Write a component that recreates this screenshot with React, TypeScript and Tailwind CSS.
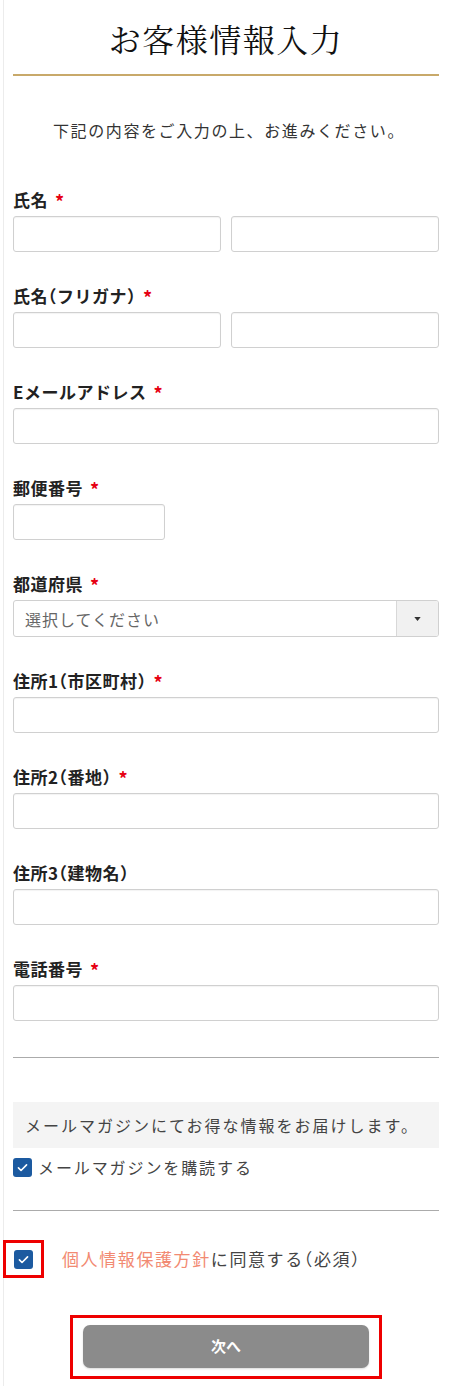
const SANS = "font-['Noto_Sans_CJK_JP','Noto_Sans',sans-serif]";

const Label = ({ text, required }: { text: string; required?: boolean }) => (
  <div className="h-6 mb-1 flex items-center text-[17px] font-bold text-[#222] leading-6 tracking-[0.5px] [font-feature-settings:'halt']">
    <span>{text}</span>
    {required && <span className="ml-[7px] text-[#e60012] text-[18px] leading-none mt-[2px]">*</span>}
  </div>
);

const TextInput = ({ className = "" }: { className?: string }) => (
  <input
    type="text"
    className={`h-[36px] rounded-[3px] border border-[#d0d0d0] bg-white px-3 shadow-[inset_0_1px_1px_rgba(0,0,0,0.05)] ${className}`}
  />
);

const Check = () => (
  <span className="flex h-[19px] w-[19px] shrink-0 items-center justify-center rounded-[3px] bg-[#1c5aa0]">
    <svg viewBox="0 0 16 16" className="h-[13px] w-[13px]">
      <path d="M3 8.5l3.2 3.2L13 4.8" fill="none" stroke="white" strokeWidth="2" strokeLinecap="round" strokeLinejoin="round" />
    </svg>
  </span>
);

const App = () => {
  return (
    <div className={`${SANS} w-[450px] min-h-[1386px] bg-white`}>
      <div className="ml-[3px] min-h-[1386px] border-l border-[#ececec] pl-[9px] pr-[11px] pt-[14px]">
        <div className="border-b-2 border-[#c8a96a] pb-[12px]">
          <h1 className="h-12 text-center text-[32px] leading-[48px] tracking-[1.5px] text-[#111] font-['Noto_Serif_CJK_JP','Liberation_Serif','Noto_Sans_CJK_JP',serif]">
            お客様情報入力
          </h1>
        </div>

        <p className="mt-[42px] h-6 pl-[6px] text-center text-[16px] leading-6 tracking-[1.6px] text-[#333]">
          下記の内容をご入力の上、お進みください。
        </p>

        <div className="mt-[46px]">
          <div className="mb-8">
            <Label text="氏名" required />
            <div className="flex gap-[10px]">
              <TextInput className="w-0 flex-1" />
              <TextInput className="w-0 flex-1" />
            </div>
          </div>
          <div className="mb-8">
            <Label text="氏名（フリガナ）" required />
            <div className="flex gap-[10px]">
              <TextInput className="w-0 flex-1" />
              <TextInput className="w-0 flex-1" />
            </div>
          </div>
          <div className="mb-8">
            <Label text="Eメールアドレス" required />
            <TextInput className="w-full block" />
          </div>
          <div className="mb-8">
            <Label text="郵便番号" required />
            <TextInput className="w-[152px] block" />
          </div>
          <div className="mb-8">
            <Label text="都道府県" required />
            <div className="flex h-[37px] overflow-hidden rounded-[3px] border border-[#d0d0d0]">
              <div className="flex flex-1 items-center pl-[11px] text-[16px] tracking-[1px] text-[#666]">選択してください</div>
              <div className="flex w-[42px] items-center justify-center border-l border-[#d8d8d8] bg-[#f1f1f1]">
                <svg viewBox="0 0 8 5" className="h-[4px] w-[7px]">
                  <path d="M0 0h8L4 5z" fill="#333" />
                </svg>
              </div>
            </div>
          </div>
          <div className="mb-8">
            <Label text="住所1（市区町村）" required />
            <TextInput className="w-full block" />
          </div>
          <div className="mb-8">
            <Label text="住所2（番地）" required />
            <TextInput className="w-full block" />
          </div>
          <div className="mb-8">
            <Label text="住所3（建物名）" />
            <TextInput className="w-full block" />
          </div>
          <div>
            <Label text="電話番号" required />
            <TextInput className="w-full block" />
          </div>
        </div>

        <hr className="mt-[36px] border-t border-[#ababab]" />

        <div className="mt-[44px] flex h-[46px] items-center bg-[#f4f4f4] pl-[12px] text-[16px] tracking-[2px] text-[#444]">
          メールマガジンにてお得な情報をお届けします。
        </div>
        <label className="mt-[7px] flex items-center gap-[6px] text-[16px] tracking-[1.9px] text-[#444]">
          <Check />
          <span>メールマガジンを購読する</span>
        </label>

        <hr className="mt-[31px] border-t border-[#ababab]" />

        <div className="mt-[29px] flex items-center">
          <div className="-ml-[10px] flex h-[38px] w-[41px] items-center justify-center border-[3px] border-[#ee0000]">
            <Check />
          </div>
          <div className="ml-[18px] text-[17px] tracking-[1.6px] text-[#444] [font-feature-settings:'halt']">
            <span className="text-[#f28a72]">個人情報保護方針</span>に同意する（必須）
          </div>
        </div>

        <div className="mt-[37px] flex justify-center">
          <div className="w-[312px] border-[3px] border-[#ee0000] px-[10px] pt-[7px] pb-[8px]">
            <button className="h-[43px] w-full rounded-[7px] bg-[#8b8b8b] text-[15px] font-bold text-white shadow-[0_1px_2px_rgba(0,0,0,0.15)]">
              次へ
            </button>
          </div>
        </div>
      </div>
    </div>
  );
};

export default App;
